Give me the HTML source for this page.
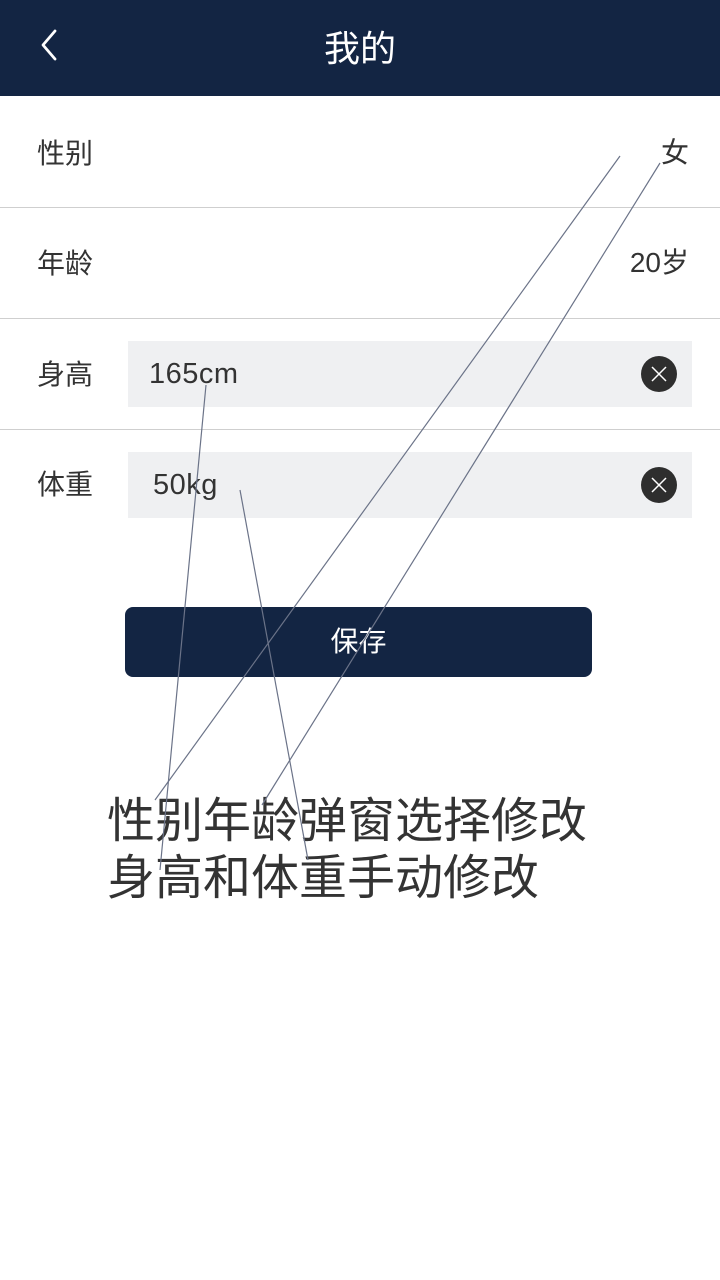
<!DOCTYPE html>
<html><head><meta charset="utf-8"><style>
*{margin:0;padding:0;box-sizing:border-box}
body{width:720px;height:1280px;background:#fff;position:relative;overflow:hidden;font-family:"Liberation Sans","Noto Sans CJK SC",sans-serif;color:#333}
.hdr{position:absolute;left:0;top:0;width:720px;height:96px;background:#132543}
.hdr .t{position:absolute;left:0;width:720px;top:24px;text-align:center;color:#fff;font-size:36px;line-height:50px}
.lab{position:absolute;left:37px;font-size:28px;line-height:40px;color:#333}
.val{position:absolute;right:31px;font-size:28px;line-height:40px;color:#333}
.div{position:absolute;left:0;width:720px;height:1px;background:#cfcfcf}
.inp{position:absolute;left:128px;width:564px;height:66px;background:#eff0f2}
.inp span{position:absolute;top:13px;font-size:29px;line-height:40px;color:#333;letter-spacing:0.5px}
.clr{position:absolute;left:513px;top:15px;width:36px;height:36px;border-radius:50%;background:#2e2e2e}
.btn{position:absolute;left:125px;top:607px;width:467px;height:70px;border-radius:8px;background:#132543;color:#fff;font-size:28px;line-height:70px;text-align:center}
.big{position:absolute;left:107px;font-size:48px;line-height:58px;color:#333;letter-spacing:0}
</style></head><body>
<div class="hdr">
<svg style="position:absolute;left:36px;top:28px" width="24" height="34" viewBox="0 0 24 34"><path d="M19 3 L7 17 L19 31" stroke="#fff" stroke-width="2.8" fill="none" stroke-linecap="round" stroke-linejoin="round"/></svg>
<div class="t">我的</div>
</div>
<div class="lab" style="top:134px">性别</div><div class="val" style="top:133px">女</div>
<div class="div" style="top:207px"></div>
<div class="lab" style="top:244px">年龄</div><div class="val" style="top:243px">20岁</div>
<div class="div" style="top:318px"></div>
<div class="lab" style="top:355px">身高</div>
<div class="inp" style="top:341px"><span style="left:21px">165cm</span>
<div class="clr"><svg width="36" height="36"><path d="M11 11L25 25M25 11L11 25" stroke="#fff" stroke-width="1.5"/></svg></div></div>
<div class="div" style="top:429px"></div>
<div class="lab" style="top:465px">体重</div>
<div class="inp" style="top:452px"><span style="left:25px">50kg</span>
<div class="clr"><svg width="36" height="36"><path d="M11 11L25 25M25 11L11 25" stroke="#fff" stroke-width="1.5"/></svg></div></div>
<div class="btn">保存</div>
<div class="big" style="top:793px">性别年龄弹窗选择修改</div>
<div class="big" style="top:850px">身高和体重手动修改</div>
<svg style="position:absolute;left:0;top:0" width="720" height="1280"><g stroke="#6b7388" stroke-width="1.2" fill="none">
<path d="M620 156 L155 800"/><path d="M660 163 L262 805"/><path d="M206 385 L160 870"/><path d="M240 490 L308 860"/></g></svg>
</body></html>
